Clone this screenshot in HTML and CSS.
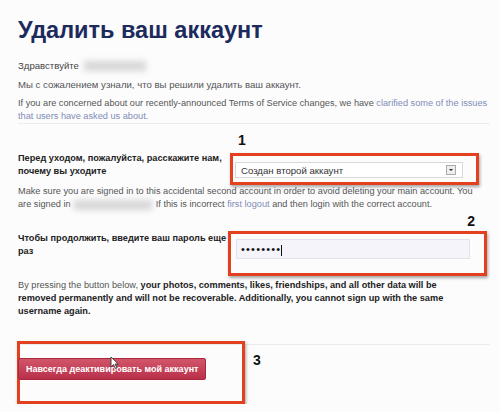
FILE: index.html
```html
<!DOCTYPE html>
<html lang="ru">
<head>
    <meta charset="UTF-8">
    <meta name="viewport" content="width=device-width, initial-scale=1.0">
    <title>Удалить ваш аккаунт</title>
    <link rel="stylesheet" href="styles.css">
</head>
<body>

<div class="page">
    <h1>Удалить ваш аккаунт</h1>

    <p class="ru greet">Здравствуйте <span class="blur blur-name"></span></p>
    <p class="ru">Мы с сожалением узнали, что вы решили удалить ваш аккаунт.</p>
    <p class="terms">If you are concerned about our recently-announced Terms of Service changes, we have <a href="#">clarified some of the issues that users have asked us about.</a></p>

    <hr class="divider">

    <div class="row row-reason">
        <label class="row-label" for="reason">Перед уходом, пожалуйста, расскажите нам, почему вы уходите</label>
        <div class="mark mark-reason">
            <span class="mark-num num-1">1</span>
            <div class="select" id="reason">
                <span>Создан второй аккаунт</span>
                <span class="select-arrow"></span>
            </div>
        </div>
    </div>

    <p class="note">Make sure you are signed in to this accidental second account in order to avoid deleting your main account. You are signed in <span class="blur blur-mail"></span> If this is incorrect <a href="#">first logout</a> and then login with the correct account.</p>

    <div class="row row-pass">
        <label class="row-label" for="pass">Чтобы продолжить, введите ваш пароль еще раз</label>
        <div class="mark mark-pass">
            <span class="mark-num num-2">2</span>
            <div class="input" id="pass">&bull;&bull;&bull;&bull;&bull;&bull;&bull;&bull;<span class="caret"></span></div>
        </div>
    </div>

    <p class="warning">By pressing the button below, <b>your photos, comments, likes, friendships, and all other data will be removed permanently and will not be recoverable. Additionally, you cannot sign up with the same username again.</b></p>

    <hr class="divider divider-bottom">

    <div class="mark mark-button">
        <span class="mark-num num-3">3</span>
        <button class="delete-button">Навсегда деактивировать мой аккаунт</button>
        <svg class="cursor" width="9" height="13" viewBox="0 0 9 13">
            <path d="M1 1 L1 11 L3.5 8.6 L5.3 12.4 L6.9 11.7 L5.1 8 L8.3 8 Z" fill="#fff" stroke="#333" stroke-width="0.9" stroke-linejoin="round"/>
        </svg>
    </div>
</div>

</body>
</html>
```

FILE: styles.css
```css
body {
    margin: 0;
    background-color: #fcfcfd;
    font-family: "Liberation Sans", Arial, sans-serif;
    color: #555;
}
.page {
    padding: 13px 10px 0 18px;
}
h1 {
    margin: 0 0 12px;
    font-size: 23.5px;
    line-height: 34px;
    color: #1c2b5c;
    font-weight: bold;
}
p {
    margin: 0 0 6px;
    font-size: 9.2px;
    line-height: 13px;
}
p.ru {
    font-size: 9.6px;
}
.greet {
    color: #444;
}
.terms {
    margin-bottom: 0;
}
a {
    color: #7f8db6;
    text-decoration: none;
}
/* blurred out personal data */
.blur {
    display: inline-block;
    vertical-align: middle;
    height: 10px;
    background-color: #d6d6d8;
    filter: blur(3px);
}
.blur-name {
    width: 62px;
    margin-left: 2px;
}
.blur-mail {
    width: 78px;
    margin: 0 1px;
}
.divider {
    border: 0;
    border-top: 1px solid #ececf0;
    margin: 0 0 27px;
}
.row {
    display: flex;
    align-items: flex-start;
}
.row-label {
    font-size: 9.2px;
    line-height: 13px;
    font-weight: bold;
    color: #222;
}
/* red annotation frames */
.mark {
    position: relative;
    border: 3px solid #e3401f;
    box-shadow: 1px 2px 3px rgba(0, 0, 0, 0.35);
}
.mark-num {
    position: absolute;
    font-size: 14px;
    line-height: 16px;
    font-weight: bold;
    color: #111;
}
.row-reason .row-label {
    flex: 0 0 212px;
    padding-top: 1px;
}
.mark-reason {
    box-sizing: border-box;
    width: 249px;
    height: 32px;
    margin-top: 2px;
}
.num-1 {
    top: -24px;
    left: 5px;
}
.select {
    display: flex;
    align-items: center;
    justify-content: space-between;
    box-sizing: border-box;
    width: 228px;
    height: 16px;
    margin: 6px 0 0 2px;
    padding: 0 6px 0 5px;
    background-color: #fff;
    border: 1px solid #d8d8dc;
    font-size: 9.6px;
    color: #333;
}
.select-arrow {
    position: relative;
    width: 8px;
    height: 8px;
    border: 1px solid #aaa;
    background-color: #eee;
}
.select-arrow::after {
    content: "";
    position: absolute;
    left: 2px;
    top: 3px;
    border-left: 2px solid transparent;
    border-right: 2px solid transparent;
    border-top: 2px solid #222;
}
.note {
    margin: 0 0 20px;
    padding-right: 12px;
}
.row-pass .row-label {
    flex: 0 0 214px;
    padding-top: 1px;
}
.mark-pass {
    box-sizing: border-box;
    width: 259px;
    height: 45px;
    margin-left: -4px;
}
.num-2 {
    top: -21px;
    right: 9px;
}
.input {
    box-sizing: border-box;
    width: 234px;
    height: 20px;
    margin: 5px 0 0 5px;
    padding: 0 4px;
    background-color: #f4f4fa;
    border: 1px solid #e2e2ea;
    font-size: 11px;
    line-height: 18px;
    color: #111;
    letter-spacing: 1.2px;
}
.caret {
    display: inline-block;
    width: 1px;
    height: 11px;
    vertical-align: middle;
    background-color: #111;
}
.warning {
    margin: 3px 0 6px;
    padding-right: 14px;
}
.warning b {
    color: #222;
}
.divider-bottom {
    margin: 26px 0 0;
}
.mark-button {
    box-sizing: border-box;
    width: 228px;
    height: 63px;
    margin: -4px 0 0 -1px;
}
.num-3 {
    top: 8px;
    left: 233px;
}
.delete-button {
    display: block;
    margin: 14px 0 0 -2px;
    padding: 0 7px;
    height: 22px;
    border: 1px solid #a8283c;
    border-radius: 2px;
    background: linear-gradient(#d2566a, #b8304a);
    color: #fff;
    font-family: "Liberation Sans", Arial, sans-serif;
    font-size: 9px;
    font-weight: bold;
}
.cursor {
    position: absolute;
    left: 90px;
    top: 12px;
}
```
